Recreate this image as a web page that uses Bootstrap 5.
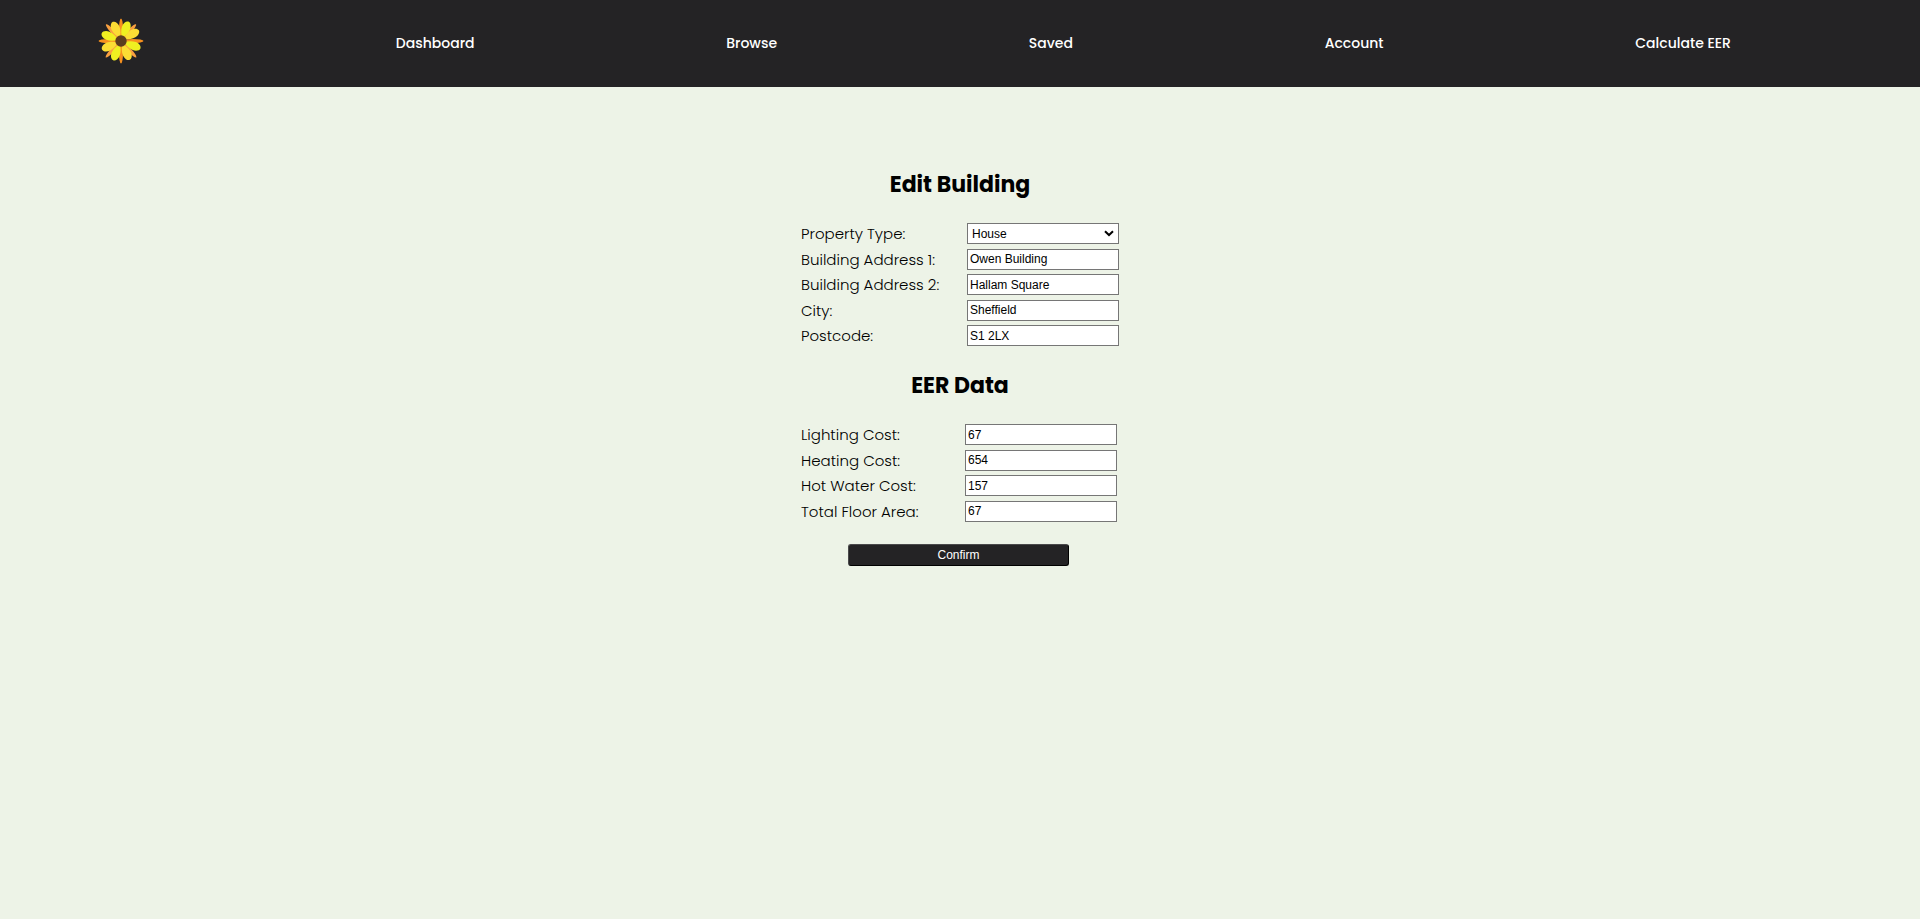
<!DOCTYPE html>
<html lang="en">
<head>
<meta charset="utf-8">
<meta name="viewport" content="width=device-width, initial-scale=1">
<title>Edit Building</title>
<link href="https://cdn.jsdelivr.net/npm/bootstrap@5.3.0/dist/css/bootstrap.min.css" rel="stylesheet">
<style>
  body { background: #edf3e7; color: #000; font-family: Poppins, Inter, sans-serif; font-size: 15px; line-height: 21px; }
  .site-bar { background: #242325; min-height: 87px; padding: 0 189px 0 98px; }
  .site-bar a { color: #fff; font-size: 14px; font-weight: 500; }
  .site-logo { width: 46px; height: 46px; margin-bottom: 6px; }
  .page-main { padding-top: 81px; }
  .building-form { width: 318px; }
  .form-title { font-size: 22px; font-weight: 700; line-height: 34px; margin: 0 0 21px; }
  .field-grid { display: grid; grid-auto-rows: 21px; align-content: space-between; font-weight: 300; }
  .address-grid { grid-template-columns: 166px 152px; min-height: 123px; margin-bottom: 23px; }
  .cost-grid { grid-template-columns: 164px 152px; min-height: 98px; margin-bottom: 22px; }
  .field-box { height: 21px; margin: 0; padding: 0 2px; border: 1px solid #767676; border-radius: 0; background: #fff; color: #000; font: 12px "Liberation Sans", Arial, sans-serif; }
  .field-pick { width: 100%; padding: 0 4px; appearance: none; }
  .pick-arrow { position: absolute; right: 5px; top: 7px; pointer-events: none; }
  .confirm-btn { width: 221px; height: 22px; margin-left: 47px; padding: 0; border: 1px solid; border-color: #4a494b #000 #000 #4a494b; border-radius: 3px; background: #242325; color: #fff; font: 12px "Liberation Sans", Arial, sans-serif; }
</style>
</head>
<body>
<nav class="site-bar d-flex align-items-center justify-content-between">
  <a href="#" class="d-flex" aria-label="Home">
    <svg class="site-logo" viewBox="-23 -23 46 46" aria-hidden="true">
      <defs>
        <ellipse id="spike" cx="0" cy="-12" rx="2" ry="10.5"/>
        <path id="petal" d="M0-3C-2-6-4.3-10-4.3-14.2C-4.3-18-2.2-20.8 0-20.8C2.2-20.8 4.3-18 4.3-14.2C4.3-10 2-6 0-3Z"/>
      </defs>
      <g fill="#f7901e">
        <use href="#spike"/><use href="#spike" transform="rotate(90)"/><use href="#spike" transform="rotate(180)"/><use href="#spike" transform="rotate(270)"/>
      </g>
      <g fill="#f9a040">
        <use href="#spike" transform="rotate(42)"/><use href="#spike" transform="rotate(137)"/><use href="#spike" transform="rotate(223)"/><use href="#spike" transform="rotate(318)"/>
      </g>
      <g fill="#fbdd34">
        <use href="#petal" transform="rotate(-23)"/><use href="#petal" transform="rotate(59)"/><use href="#petal" transform="rotate(155)"/><use href="#petal" transform="rotate(246)"/>
      </g>
      <g fill="#eff021">
        <use href="#petal" transform="rotate(21)"/><use href="#petal" transform="rotate(111)"/><use href="#petal" transform="rotate(202)"/><use href="#petal" transform="rotate(292)"/>
      </g>
      <circle r="5.7" fill="#5c3d1f"/>
    </svg>
  </a>
  <a class="text-decoration-none" href="#">Dashboard</a>
  <a class="text-decoration-none" href="#">Browse</a>
  <a class="text-decoration-none" href="#">Saved</a>
  <a class="text-decoration-none" href="#">Account</a>
  <a class="text-decoration-none" href="#">Calculate EER</a>
</nav>

<main class="page-main">
  <form class="building-form mx-auto">
    <h2 class="form-title text-center">Edit Building</h2>
    <div class="field-grid address-grid">
      <label for="ptype">Property Type:</label>
      <div class="position-relative d-flex">
        <select id="ptype" class="field-box field-pick"><option>House</option><option>Flat</option></select>
        <svg class="pick-arrow" width="10" height="7" viewBox="0 0 10 7" aria-hidden="true"><path d="M1 1.2 5 5 9 1.2" fill="none" stroke="#000" stroke-width="2"/></svg>
      </div>
      <label for="addr1">Building Address 1:</label>
      <input id="addr1" class="field-box" type="text" value="Owen Building">
      <label for="addr2">Building Address 2:</label>
      <input id="addr2" class="field-box" type="text" value="Hallam Square">
      <label for="city">City:</label>
      <input id="city" class="field-box" type="text" value="Sheffield">
      <label for="postcode">Postcode:</label>
      <input id="postcode" class="field-box" type="text" value="S1 2LX">
    </div>

    <h2 class="form-title text-center">EER Data</h2>
    <div class="field-grid cost-grid">
      <label for="lighting">Lighting Cost:</label>
      <input id="lighting" class="field-box" type="text" value="67">
      <label for="heating">Heating Cost:</label>
      <input id="heating" class="field-box" type="text" value="654">
      <label for="water">Hot Water Cost:</label>
      <input id="water" class="field-box" type="text" value="157">
      <label for="area">Total Floor Area:</label>
      <input id="area" class="field-box" type="text" value="67">
    </div>
    <button type="submit" class="confirm-btn d-block">Confirm</button>
  </form>
</main>
<script src="https://cdn.jsdelivr.net/npm/bootstrap@5.3.0/dist/js/bootstrap.bundle.min.js"></script>
</body>
</html>
